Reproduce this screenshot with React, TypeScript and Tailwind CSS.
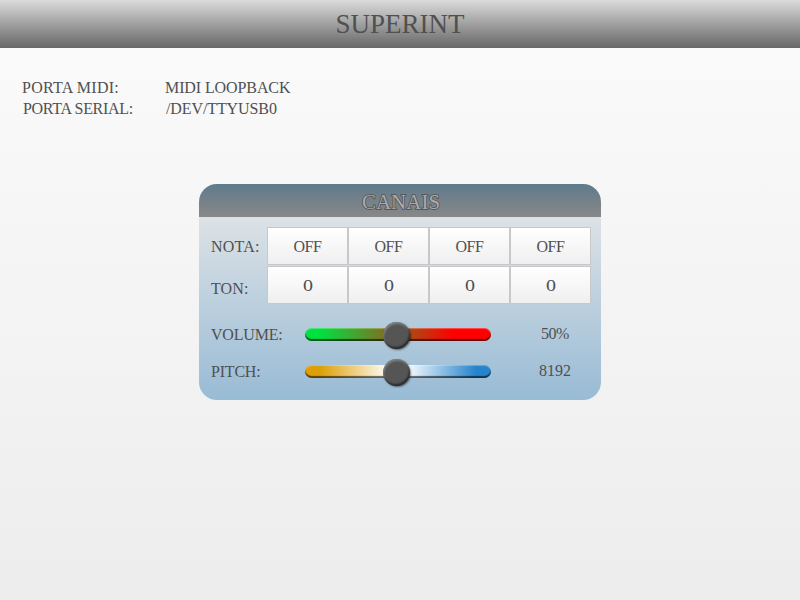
import React from "react";

const CHANNELS = [
  { note: "OFF", tone: "0" },
  { note: "OFF", tone: "0" },
  { note: "OFF", tone: "0" },
  { note: "OFF", tone: "0" },
];

function Cell({ children }: { children: React.ReactNode }) {
  return (
    <div className="flex h-[38px] w-[81px] items-center justify-center border border-[#c6c8cb] bg-gradient-to-b from-white to-[#efefef] tracking-[-0.5px]">
      {children}
    </div>
  );
}

function Slider({ track }: { track: string }) {
  return (
    <div className="relative h-[13px] w-[186px] shrink-0">
      <div
        className={`h-[13px] w-full rounded-full shadow-[inset_0_-2px_1px_rgba(0,0,0,0.6),inset_0_1px_1px_rgba(255,255,255,0.3)] ${track}`}
      />
      <div className="absolute top-[-6px] left-[78px] size-[27px] rounded-full bg-[#555555] shadow-[inset_1px_2px_2px_rgba(170,170,170,0.5),inset_-1px_-2px_2px_rgba(0,0,0,0.5),1px_1px_2px_rgba(0,0,0,0.5)]" />
    </div>
  );
}

export default function App() {
  return (
    <div className="flex h-[600px] w-[800px] flex-col items-start overflow-hidden bg-gradient-to-b from-[#fbfbfb] to-[#ededed] font-['Liberation_Serif',serif] text-[16px] leading-[21px] text-[#505050]">
      <header className="flex h-12 w-full items-center justify-center bg-gradient-to-b from-[#dcdcdc] to-[#686868] text-[27px] leading-[48px]">
        SUPERINT
      </header>

      <section className="mt-[29px] ml-[22px] grid h-[42px] auto-rows-[21px] grid-cols-[143px_1fr]">
        <div className="tracking-[0.25px]">PORTA MIDI:</div>
        <div className="tracking-[-0.1px]">MIDI LOOPBACK</div>
        <div className="pl-px tracking-[-0.3px]">PORTA SERIAL:</div>
        <div className="pl-px tracking-[-0.1px]">/DEV/TTYUSB0</div>
      </section>

      <main className="mt-[65px] ml-[199px] h-[216px] w-[402px] overflow-hidden rounded-[18px] bg-gradient-to-b from-[#e9e9e9] to-[#98bbd5]">
        <h1 className="flex h-[33px] items-center justify-center bg-gradient-to-b from-[#5f7a8b] to-[#888888] pt-[3px] pl-[2px] text-[21px] text-[#aaaaaa] [-webkit-text-stroke:1.5px_#505050] [paint-order:stroke_fill]">
          CANAIS
        </h1>
        <div className="mt-[10px] flex h-[78px] pl-3">
          <div className="w-[56px] shrink-0">
            <div className="pt-[9px] tracking-[0.2px]">NOTA:</div>
            <div className="pt-[21px] tracking-[0.1px]">TON:</div>
          </div>
          <div className="flex h-[77px] flex-col gap-px bg-[#d5dce1]">
            <div className="flex">
              {CHANNELS.map((c, i) => (
                <Cell key={i}>{c.note}</Cell>
              ))}
            </div>
            <div className="flex">
              {CHANNELS.map((c, i) => (
                <Cell key={i}>
                  <span className="inline-block scale-x-[1.25]">{c.tone}</span>
                </Cell>
              ))}
            </div>
          </div>
        </div>
        <div className="mt-[11px] flex h-[37px] items-center pl-3">
          <div className="w-[94px] shrink-0 tracking-[-0.2px]">VOLUME:</div>
          <Slider track="bg-[linear-gradient(to_right,#00e040_8%,#ff0000_80%)]" />
          <div className="w-[128px] shrink-0 pb-[3px] text-center tracking-[-0.5px]">50%</div>
        </div>
        <div className="flex h-[37px] items-center pl-3">
          <div className="w-[94px] shrink-0 tracking-[-0.2px]">PITCH:</div>
          <Slider track="bg-[linear-gradient(to_right,#dd9f08_8%,#ffffff_46%,#ffffff_54%,#2584cc_92%)]" />
          <div className="w-[128px] shrink-0 pb-[2px] text-center">8192</div>
        </div>
      </main>
    </div>
  );
}
